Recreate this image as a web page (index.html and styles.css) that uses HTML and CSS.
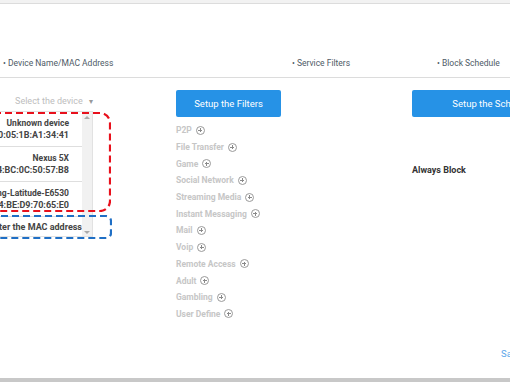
FILE: index.html
```html
<!DOCTYPE html>
<html lang="en">
<head>
    <meta charset="UTF-8">
    <title>Parental Control</title>
    <link rel="stylesheet" href="styles.css">
</head>
<body>
    <div class="topbar"></div>
    <div class="steps">
        <span class="step">&bull; Device Name/MAC Address</span>
        <span class="step">&bull; Service Filters</span>
        <span class="step">&bull; Block Schedule</span>
    </div>
    <div class="main">
        <div class="col device-col">
            <div class="select-line">Select the device <span class="caret">&#9662;</span></div>
            <div class="device-box">
                <div class="device-list">
                    <div class="device">
                        <span class="name">Unknown device</span>
                        <span class="mac">00:05:1B:A1:34:41</span>
                    </div>
                    <div class="device">
                        <span class="name">Nexus 5X</span>
                        <span class="mac">A4:BC:0C:50:57:B8</span>
                    </div>
                    <div class="device">
                        <span class="name">Wang-Latitude-E6530</span>
                        <span class="mac">84:BE:D9:70:65:E0</span>
                    </div>
                    <div class="mac-input">Enter the MAC address</div>
                </div>
                <div class="scrollbar">
                    <span class="arrow up"></span>
                    <span class="arrow down"></span>
                </div>
                <svg class="mark red" width="150" height="100" viewBox="0 0 150 100">
                    <rect x="1" y="1" width="148" height="98" rx="10" ry="10" />
                </svg>
                <svg class="mark blue" width="150" height="24" viewBox="0 0 150 24">
                    <rect x="1" y="1" width="148" height="22" rx="5" ry="5" />
                </svg>
            </div>
        </div>
        <div class="col filter-col">
            <button class="btn">Setup the Filters</button>
            <ul class="filters">
                <li>P2P <span class="plus"></span></li>
                <li>File Transfer <span class="plus"></span></li>
                <li>Game <span class="plus"></span></li>
                <li>Social Network <span class="plus"></span></li>
                <li>Streaming Media <span class="plus"></span></li>
                <li>Instant Messaging <span class="plus"></span></li>
                <li>Mail <span class="plus"></span></li>
                <li>Voip <span class="plus"></span></li>
                <li>Remote Access <span class="plus"></span></li>
                <li>Adult <span class="plus"></span></li>
                <li>Gambling <span class="plus"></span></li>
                <li>User Define <span class="plus"></span></li>
            </ul>
        </div>
        <div class="col schedule-col">
            <button class="btn wide">Setup the Schedule</button>
            <div class="always">Always Block</div>
            <a class="save">Save</a>
        </div>
    </div>
    <div class="bottombar"></div>
</body>
</html>
```

FILE: styles.css
```css
body {
    margin: 0;
    font-family: Roboto, "Liberation Sans", sans-serif;
    background: #fff;
    color: #333;
    width: 510px;
    height: 382px;
    overflow: hidden;
    display: flex;
    flex-direction: column;
}
.topbar {
    height: 3px;
    background: #f2f2f2;
    border-bottom: 1px solid #dcdcdc;
}
.steps {
    display: grid;
    grid-template-columns: 289px 145px 1fr;
    padding: 53px 0 8px 3px;
    border-bottom: 1px solid #dcdcdc;
    font-size: 8.5px;
    line-height: 12px;
    color: #4e5a66;
    white-space: nowrap;
}
.main {
    flex: 1;
    display: grid;
    grid-template-columns: 176px 236px 1fr;
}
.col {
    min-width: 0;
}

/* device column */
.device-col {
    padding-top: 17px;
}
.select-line {
    width: 93px;
    text-align: right;
    font-size: 9px;
    line-height: 12px;
    color: #bdbdbd;
}
.caret {
    color: #999;
    font-size: 8px;
    margin-left: 4px;
}
.device-box {
    position: relative;
    display: flex;
    width: 93px;
    margin-top: 3px;
    border-top: 1px solid #e2e2e2;
    border-bottom: 1px solid #e2e2e2;
    border-right: 1px solid #e2e2e2;
    box-sizing: border-box;
}
.device-list {
    width: 82px;
    font-size: 9px;
    font-weight: 700;
    color: #444;
}
.device {
    height: 34px;
    border-bottom: 1px solid #dedede;
    display: flex;
    flex-direction: column;
    align-items: flex-end;
    justify-content: center;
    padding-right: 13px;
    line-height: 12px;
    white-space: nowrap;
}
.device .name {
    font-size: 8.5px;
}
.mac-input {
    height: 19px;
    display: flex;
    justify-content: flex-end;
    align-items: center;
    white-space: nowrap;
    color: #444;
}
.scrollbar {
    width: 10px;
    background: #f1f1f1;
    display: flex;
    flex-direction: column;
    justify-content: space-between;
    align-items: center;
    padding: 4px 0 2px;
}
.arrow {
    width: 0;
    height: 0;
    border-left: 3px solid transparent;
    border-right: 3px solid transparent;
}
.arrow.up {
    border-bottom: 3px solid #aaa;
}
.arrow.down {
    border-top: 3px solid #aaa;
}
.mark {
    position: absolute;
    left: -39px;
    fill: none;
    stroke-width: 2.2;
    stroke-dasharray: 7 4;
}
.mark.red {
    top: 0;
    stroke: #e8101c;
}
.mark.blue {
    top: 103px;
    left: -38px;
    stroke: #1f6fc5;
}

/* filters column */
.filter-col {
    padding-top: 12px;
}
.btn {
    display: block;
    width: 105px;
    height: 27px;
    border: none;
    border-radius: 2px;
    background: #2692e6;
    color: #fff;
    font-family: inherit;
    font-size: 9.5px;
    padding: 0;
}
.btn.wide {
    width: 162px;
}
.filters {
    list-style: none;
    margin: 5px 0 0;
    padding: 0;
    font-size: 8.5px;
    font-weight: 700;
    color: #c6c6c6;
}
.filters li {
    height: 16.7px;
    display: flex;
    align-items: center;
    white-space: nowrap;
}
.plus {
    position: relative;
    width: 7px;
    height: 7px;
    border: 1px solid #9a9a9a;
    border-radius: 50%;
    margin-left: 4px;
}
.plus::before,
.plus::after {
    content: "";
    position: absolute;
    background: #8a8a8a;
}
.plus::before {
    left: 1.5px;
    top: 3px;
    width: 4px;
    height: 1px;
}
.plus::after {
    left: 3px;
    top: 1.5px;
    width: 1px;
    height: 4px;
}

/* schedule column */
.schedule-col {
    padding-top: 12px;
    display: flex;
    flex-direction: column;
}
.always {
    margin-top: 48px;
    font-size: 9px;
    font-weight: 700;
    color: #333;
}
.save {
    margin: 173px 0 0 89px;
    font-size: 9.5px;
    color: #5aa6ea;
}
.bottombar {
    height: 4px;
    background: #c8c8c8;
}
```
